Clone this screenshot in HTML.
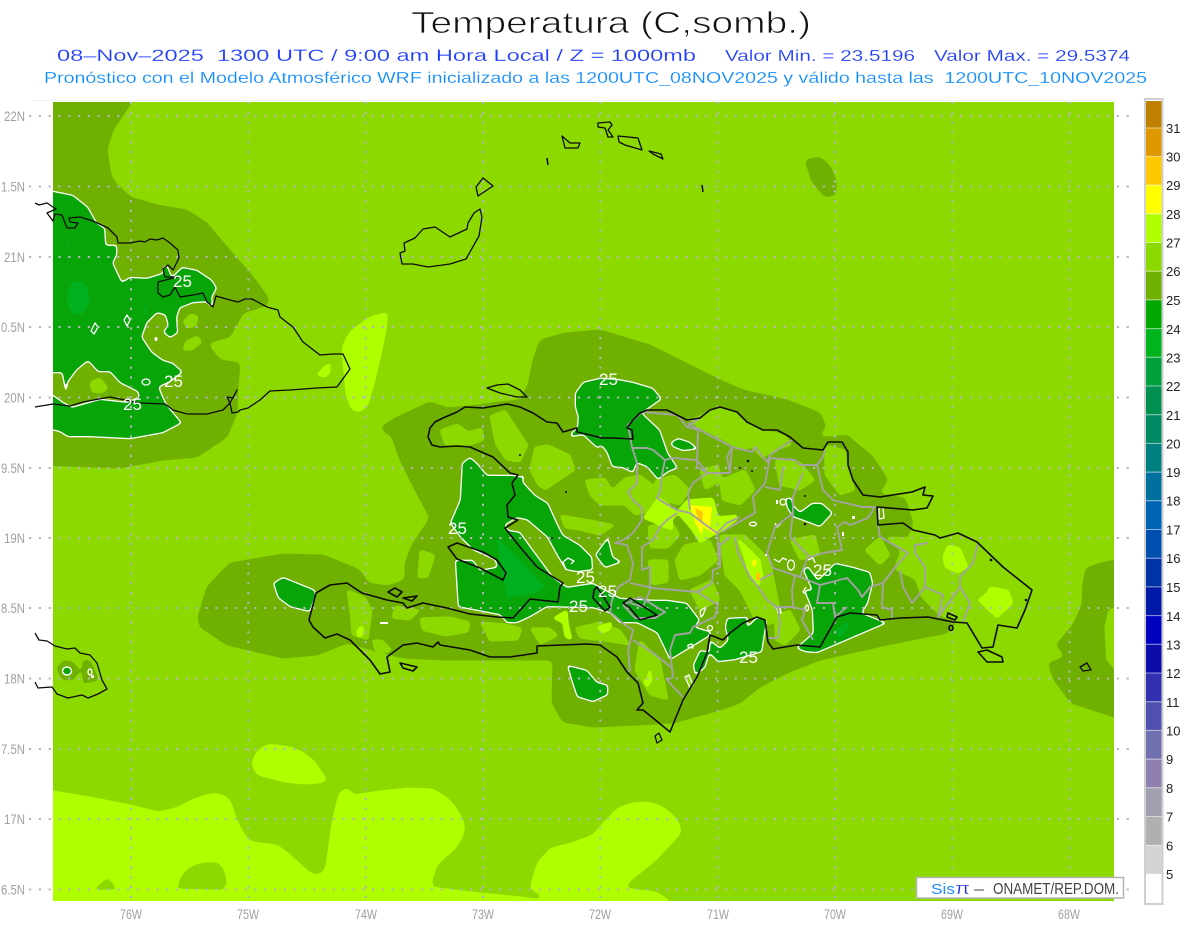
<!DOCTYPE html>
<html><head><meta charset="utf-8"><title>Temperatura</title>
<style>
html,body{margin:0;padding:0;background:#fff}
svg{display:block}
text{font-family:"Liberation Sans",Arial,sans-serif}
.d{fill:#70b000;stroke:#70b000;stroke-width:1;stroke-linejoin:round}
.b{fill:#8cd900;stroke:#8cd900;stroke-width:1;stroke-linejoin:round}
.l{fill:#b0ff00;stroke:#b0ff00;stroke-width:1;stroke-linejoin:round}
.w{fill:none;stroke:#fff;stroke-width:1.3;stroke-linejoin:round}
.p{fill:none;stroke:#a3a3a3;stroke-width:1.9;stroke-linejoin:round}
.n{fill:#fff;font-size:17px}
.a{fill:#a0a0a0;font-size:14px}
.k{fill:#222;font-size:13px}
</style></head><body>
<svg xmlns="http://www.w3.org/2000/svg" width="1200" height="927" viewBox="0 0 1200 927">
<defs>
<clipPath id="plot"><rect x="53" y="102" width="1061" height="799"/></clipPath>
<filter id="s3" filterUnits="userSpaceOnUse" x="0" y="0" width="1200" height="927" color-interpolation-filters="sRGB"><feGaussianBlur stdDeviation="3"/><feColorMatrix values="1 0 0 0 0 0 1 0 0 0 0 0 1 0 0 0 0 0 10 -4.5"/></filter>
<filter id="s2" filterUnits="userSpaceOnUse" x="0" y="0" width="1200" height="927" color-interpolation-filters="sRGB"><feGaussianBlur stdDeviation="1.8"/><feColorMatrix values="1 0 0 0 0 0 1 0 0 0 0 0 1 0 0 0 0 0 10 -4.2"/></filter>
<filter id="tw" filterUnits="userSpaceOnUse" x="0" y="0" width="1200" height="927" color-interpolation-filters="sRGB"><feGaussianBlur stdDeviation="1.6"/><feColorMatrix values="1 0 0 0 0 0 1 0 0 0 0 0 1 0 0 0 0 0 10 -3.7"/></filter>
<filter id="tg" filterUnits="userSpaceOnUse" x="0" y="0" width="1200" height="927" color-interpolation-filters="sRGB"><feGaussianBlur stdDeviation="1.6"/><feColorMatrix values="1 0 0 0 0 0 1 0 0 0 0 0 1 0 0 0 0 0 10 -6.7"/></filter>
<g id="greens">
<polygon points="40,186 53,191 73,195 88,207 97,223 105,228 106,245 117,245 117,255 113,263 122,282 130,277 147,278 163,273 163,267 167,265 172,277 182,267 197,270 212,280 217,288 212,297 213,306 208,305 207,302 193,303 180,308 177,317 178,333 170,338 163,332 168,325 165,315 157,313 147,323 142,337 152,352 163,360 173,363 183,372 170,382 159,387 163,397 167,405 182,423 163,433 130,439 90,437 68,437 60,432 40,427 40,388 53,395 63,402 72,407 100,399 127,402 139,397 138,392 120,383 110,372 98,372 88,361 77,370 68,382 66,395 62,373 40,373"/>
<polygon points="600,378 583,382 575,393 575,407 578,417 577,428 572,432 570,437 583,435 597,448 602,446 607,453 612,467 623,468 633,473 637,463 647,467 658,480 668,472 678,468 668,453 660,430 642,413 662,399 653,388 633,382 617,379"/>
<polygon points="462,463 470,457 477,463 487,475 513,475 522,477 525,468 523,482 535,495 548,503 557,523 563,535 580,545 592,557 593,570 577,572 566,570 558,557 547,537 527,520 517,518 505,525 508,530 520,532 533,550 553,577 567,587 593,583 620,598 653,600 667,600 687,603 700,620 695,627 712,632 708,637 690,648 670,660 657,633 637,623 620,623 610,613 593,608 547,607 530,617 517,623 507,623 500,615 458,607 455,560 473,560 480,570 497,567 495,560 473,550 460,537 450,523 460,500"/>
<polygon points="727,618 748,617 747,627 757,617 767,620 762,652 735,660 718,662 709,653 710,640 720,648 728,640 725,627"/>
<polygon points="835,563 853,567 870,572 873,583 868,603 862,613 887,623 817,653 805,652 796,648 813,633 812,610 804,590 812,590 803,570 808,566 818,580"/>
<polygon points="800,512 812,503 822,503 833,513 820,527 807,522 793,517 787,508 785,498 792,498 793,505"/>
<polygon points="670,443 678,438 690,442 698,449 683,451 673,447"/>
<polygon points="595,555 608,537 613,557 622,562 605,568"/>
<polygon points="567,665 587,670 597,682 608,685 608,695 593,702 577,697 572,682"/>
<polygon points="273,583 283,577 315,590 316,595 310,612 290,607 278,598"/>
<polygon points="700,650 710,652 705,668 695,675 693,665"/>
</g>
</defs>
<rect width="1200" height="927" fill="#fff"/>
<line x1="32" y1="100.5" x2="1118" y2="100.5" stroke="#f3f3f3"/>
<text x="411" y="33" font-size="31" fill="#111" stroke="#fff" stroke-width=".8" textLength="400" lengthAdjust="spacingAndGlyphs">Temperatura (C,somb.)</text>
<text x="57" y="61" font-size="17" fill="#1f3cff" stroke="#fff" stroke-width=".15" textLength="639" lengthAdjust="spacingAndGlyphs" xml:space="preserve">08–Nov–2025  1300 UTC / 9:00 am Hora Local / Z = 1000mb</text>
<text x="725" y="61" font-size="16" fill="#1f3cff" stroke="#fff" stroke-width=".15" textLength="190" lengthAdjust="spacingAndGlyphs">Valor Min. = 23.5196</text>
<text x="934" y="61" font-size="16" fill="#1f3cff" stroke="#fff" stroke-width=".15" textLength="196" lengthAdjust="spacingAndGlyphs">Valor Max. = 29.5374</text>
<text x="44" y="83" font-size="16" fill="#0f8cff" stroke="#fff" stroke-width=".15" textLength="1103" lengthAdjust="spacingAndGlyphs" xml:space="preserve">Pronóstico con el Modelo Atmosférico WRF inicializado a las 1200UTC_08NOV2025 y válido hasta las  1200UTC_10NOV2025</text>

<g clip-path="url(#plot)">
<rect x="53" y="102" width="1061" height="799" fill="#8cd900"/>
<!-- bright sea -->
<g filter="url(#s3)">
<polygon class="l" points="40,788 53,791 90,797 130,805 159,812 176,808 196,798 214,793 225,796 231,802 236,818 240,827 246,837 252,842 277,845 288,853 298,862 310,873 317,875 323,873 326,867 329,845 332,823 336,805 340,792 348,788 353,795 380,791 408,788 433,789 446,797 454,805 462,818 465,828 461,840 454,850 444,858 437,865 433,876 431,887 471,892 521,897 542,900 544,897 530,888 534,874 538,862 551,848 572,843 593,835 605,821 618,808 632,803 648,802 661,806 671,813 679,823 681,833 656,860 631,880 623,888 656,892 669,900 672,915 40,915"/>
<polygon class="l" points="252,762 258,750 269,744 290,747 303,752 315,762 327,780 320,783 303,784 285,782 269,778 258,775 254,770"/>
<polygon class="l" points="388,312 386,330 382,350 375,380 368,405 360,412 352,410 346,395 342,350 345,340 352,330 370,317"/>
</g>
<g filter="url(#s2)">
<polygon class="b" points="178,888 181,878 187,870 196,865 206,863 216,863 221,866 225,875 226,883 223,889"/>
<polygon class="b" points="95,889 107,879 110,881 116,889"/>
</g>
<!-- dark -->
<g filter="url(#s3)">
<polygon class="d" points="40,90 140,90 113,130 107,150 110,170 113,180 130,197 157,205 187,210 207,223 227,247 250,273 268,297 268,305 243,313 230,337 207,343 220,360 240,363 238,387 237,413 227,437 197,457 163,460 120,468 40,465"/>
<polygon class="d" points="1125,558 1101,563 1086,568 1083,583 1082,605 1073,625 1056,645 1066,657 1048,663 1054,680 1071,703 1114,717 1125,720"/>
<polygon class="d" points="805,160 820,157 830,166 836,180 836,195 825,197 812,182"/>
<polygon class="d" points="533,360 540,340 565,333 600,330 650,345 690,365 720,380 743,390 787,400 820,413 826,427 817,437 830,437 847,435 873,457 888,480 878,494 905,498 913,523 908,537 880,535 900,550 893,570 915,580 920,597 940,617 957,622 947,633 887,645 820,660 787,673 760,687 740,703 720,710 673,723 637,725 593,727 563,722 552,703 553,660 483,660 443,660 403,658 383,653 347,643 317,655 283,658 227,645 200,627 198,617 207,587 230,563 283,554 323,555 360,570 368,583 388,586 405,580 405,563 412,545 430,518 415,490 400,460 392,437 380,428 395,418 430,402 447,408 470,406 500,402 520,400 528,385"/>
</g>
<g filter="url(#s2)">
<polygon class="d" points="57,668 64,661 72,662 80,671 72,680 62,679"/>
<polygon class="d" points="82,670 84,660 90,661 95,672 98,680 84,683"/>
</g>
<!-- base patches -->
<g filter="url(#s2)">
<polygon class="b" points="1125,604 1109,610 1105,627 1107,660 1125,680"/>
<polygon class="b" points="190,314 198,316 196,326 188,328 183,322"/>
<polygon class="b" points="186,341 197,336 202,342 192,350 183,350"/>
<polygon class="b" points="90,382 100,378 108,388 102,393 92,392"/>
<polygon class="b" points="440,430 458,424 468,432 482,428 484,440 470,445 445,445"/>
<polygon class="b" points="490,416 505,410 518,430 528,445 520,462 506,460 496,445"/>
<polygon class="b" points="535,447 548,445 570,455 575,470 560,480 545,490 538,485 530,470"/>
<polygon class="b" points="585,480 605,478 612,490 625,478 640,475 660,490 655,510 635,515 625,505 600,505 590,495"/>
<polygon class="b" points="560,515 590,520 615,525 600,535 580,530 565,528"/>
<polygon class="b" points="420,550 435,555 428,577 418,578"/>
<polygon class="b" points="347,590 365,597 372,610 368,640 352,635 350,610"/>
<polygon class="b" points="395,606 420,610 410,620 392,618"/>
<polygon class="b" points="372,640 382,640 392,650 380,655 375,650"/>
<polygon class="b" points="420,618 450,617 470,622 468,632 445,636 422,630"/>
<polygon class="b" points="480,622 505,624 522,628 518,640 490,641"/>
<polygon class="b" points="530,628 550,628 558,636 540,644"/>
<polygon class="b" points="575,628 600,622 620,630 630,645 605,641 580,638"/>
<polygon class="b" points="690,420 708,412 722,408 737,412 747,422 763,430 785,435 792,445 775,450 762,458 752,447 742,450 718,437 698,427"/>
<polygon class="b" points="648,526 672,522 680,535 668,548 650,548"/>
<polygon class="b" points="684,545 710,540 718,560 700,575 680,580 675,560"/>
<polygon class="b" points="648,560 668,560 668,582 652,585"/>
<polygon class="b" points="720,535 745,535 770,560 780,610 770,625 755,620 740,590 725,575 722,555"/>
<polygon class="b" points="825,445 845,450 848,470 855,490 840,495 825,475"/>
<polygon class="b" points="775,460 800,462 815,480 800,490 780,485"/>
<polygon class="b" points="865,550 880,537 890,555 880,565"/>
<polygon class="b" points="775,615 790,610 800,630 785,645 775,640"/>
<polygon class="b" points="640,640 660,660 668,700 650,695 635,670"/>
<polygon class="b" points="720,480 745,470 755,490 740,505 722,500"/>
<polygon class="b" points="655,480 675,475 690,490 680,505 660,500"/>
<polygon class="b" points="700,470 718,465 722,480 705,490"/>
<polygon class="b" points="790,540 815,535 820,555 800,560"/>
<polygon class="b" points="690,590 712,580 720,600 700,610"/>
</g>
<!-- bright on land -->
<g filter="url(#s2)">
<polygon class="l" points="317,375 324,367 330,363 330,373 325,377"/>
<polygon class="l" points="658,497 670,505 678,513 672,520 673,530 663,527 653,522 643,518 653,505"/>
<polygon class="l" points="687,500 713,498 718,517 737,515 737,520 723,530 710,537 700,543 692,530 677,512"/>
<polygon class="l" points="737,538 747,547 760,560 763,577 757,587 767,600 760,593 748,570 743,553"/>
<polygon class="l" points="948,545 960,548 968,567 958,573 945,567 943,557"/>
<polygon class="l" points="990,587 1008,590 1013,603 997,618 978,600 987,593"/>
<polygon class="l" points="553,618 567,610 568,623 572,640 565,637 563,623"/>
<polygon class="l" points="597,627 612,622 610,630 602,633"/>
<polygon class="l" points="647,680 650,667 652,680 647,688 643,680"/>
<polygon class="l" points="357,630 363,625 363,635 358,638"/>
</g>
<rect x="380" y="622" width="8" height="2" fill="#fff"/>
<!-- yellow & orange -->
<polygon fill="#ff0" points="690,505 712,507 710,527 720,532 715,534 703,527 702,535 695,523"/>
<polygon fill="#ffc800" points="695,508 703,512 702,522 698,518"/>
<polygon fill="#ff0" points="753,559 757,561 755,567 752,565"/>
<polygon fill="#ffc800" points="756,573 760,573 760,580 756,580"/>
<!-- 25 contour greens -->
<use href="#greens" fill="#fff" filter="url(#tw)"/>
<use href="#greens" fill="#08a508" filter="url(#tg)"/>
<ellipse cx="78" cy="298" rx="11" ry="17" fill="#00b01e"/>
<polygon fill="#00b01e" points="66,240 69,244 66,246"/>
<polygon fill="#00b01e" points="141,312 147,306 145,315"/>
<polygon class="w" points="95,323 98,327 94,334 91,331"/>
<polygon class="w" points="127,315 130,320 127,326 124,320"/>
<ellipse class="w" cx="146" cy="382" rx="4" ry="3"/>
<ellipse cx="156" cy="339" rx="1.5" ry="2" fill="#fff"/>
<ellipse cx="67" cy="671" rx="4.5" ry="4" fill="#08a508" stroke="#fff" stroke-width="1.4"/>
<ellipse class="w" cx="90" cy="672" rx="2" ry="3"/>
<rect x="91" y="675" width="3" height="3" fill="#eee"/>
<polyline class="w" points="566,570 563,562 568,558 574,561 571,564"/>
<polygon fill="#00b01e" points="497,537 517,557 545,587 537,593 507,598 500,563"/>
<polygon fill="#00b01e" points="835,630 848,622 848,630 838,638"/>
<polygon fill="#8cd900" stroke="#fff" stroke-width="1.3" points="685,677 689,675 693,685 690,688"/>
<ellipse class="w" cx="753" cy="524" rx="3.5" ry="1.8"/>
<polyline class="w" points="775,523 777,527 781,523"/>
<circle class="w" cx="783" cy="502" r="3"/>
<ellipse class="w" cx="791" cy="565" rx="3.5" ry="5"/>
<polyline class="w" points="774,559 779,562 783,558 787,560"/>
<polyline class="w" points="808,560 813,558 815,563"/>
<polygon class="w" points="879,507 883,508 884,518 879,519"/>
<polyline class="w" points="806,587 803,592 807,595"/>
<ellipse class="w" cx="807" cy="608" rx="1.5" ry="3"/>
<polygon class="w" points="700,611 706,607 703,615 701,617"/>
<circle class="w" cx="710" cy="628" r="2.5"/>
<polygon class="w" points="688,645 692,644 693,648 688,647"/>
<polygon class="w" points="777,607 780,607 781,613 778,613"/>
<rect x="776" y="500" width="2" height="4" fill="#fff"/><rect x="852" y="516" width="3" height="3" fill="#fff"/><rect x="842" y="532" width="2" height="4" fill="#fff"/><rect x="765" y="554" width="2" height="2" fill="#fff"/>
</g>

<!-- grid -->
<g stroke="#b6b6b6" stroke-width="2" stroke-dasharray="2.2 7.6" fill="none">
<path d="M29 116H1136M29 186.500H1136M29 257H1136M29 327H1136M29 397.500H1136M29 468H1136M29 538H1136M29 608H1136M29 678.500H1136M29 749H1136M29 819H1136M29 889.500H1136"/>
<path d="M131 102V905M248.300 102V905M365.600 102V905M483 102V905M600.300 102V905M717.600 102V905M835 102V905M952.300 102V905M1069.600 102V905"/>
</g>

<!-- province lines -->
<g class="p">
<polyline class="p" points="642,412 628,425 632,447 637,463 637,483 628,492 633,500 642,508 642,520 633,533 623,540 615,543 627,545 633,563 630,580 618,587 612,600 610,612 625,625 633,630 628,650 630,670 627,672"/>
<polyline class="p" points="632,448 647,448 653,450 665,460 673,458 697,460 698,430 687,427 677,415 642,412"/>
<polyline class="p" points="665,460 662,475 660,492 657,498 663,502 677,510 690,513 703,523 717,533 727,523 740,517"/>
<polyline class="p" points="697,460 707,473 693,483 688,493 690,510"/>
<polyline class="p" points="707,473 730,473 732,447"/>
<polyline class="p" points="677,513 667,520 660,527 653,540 642,547 642,570 650,567 650,590 643,607 630,603"/>
<polyline class="p" points="717,533 720,550 720,567 713,570 712,583 697,592 653,588 630,583"/>
<polyline class="p" points="697,592 718,605 715,617 693,627 690,633 675,635 670,650 673,677 667,680 683,697"/>
<polyline class="p" points="633,640 653,653 672,668"/>
<polyline class="p" points="698,430 697,467 708,473 730,473 727,457 732,447 700,430 688,423"/>
<polyline class="p" points="732,447 752,452 755,447 767,462 770,455 792,440"/>
<polyline class="p" points="770,458 765,483 753,497 755,513 730,527 722,532"/>
<polyline class="p" points="765,487 780,490 783,467"/>
<polyline class="p" points="770,458 795,460 800,465 817,465 823,457 825,450"/>
<polyline class="p" points="803,473 793,497 793,513 790,537"/>
<polyline class="p" points="817,465 823,490 833,500 862,507 875,507 868,518 850,525 845,522 837,527 842,550 823,553 810,557 790,537"/>
<polyline class="p" points="793,513 775,527 767,553 773,568 800,577 808,557"/>
<polyline class="p" points="735,538 738,553 750,577 758,587 767,600 777,607 793,607 792,590 795,575 800,577"/>
<polyline class="p" points="760,580 773,573"/>
<polyline class="p" points="793,607 805,610 802,620 813,640"/>
<polyline class="p" points="778,607 780,623 778,638 768,638"/>
<polyline class="p" points="730,537 718,547 720,567"/>
<polyline class="p" points="712,583 698,592"/>
<polyline class="p" points="820,585 847,578 858,590 862,597 870,587 883,583 897,565 908,553 880,537 878,525"/>
<polyline class="p" points="897,565 883,583 882,607 892,610 892,620"/>
<polyline class="p" points="900,570 903,587 912,603 925,587 925,567 915,553 915,545 928,543"/>
<polyline class="p" points="925,587 943,595 938,617 953,597 960,587 960,577 973,563 978,543"/>
<polyline class="p" points="960,587 970,603 963,622"/>
<polyline class="p" points="820,585 817,603 833,603 835,617 847,607"/>
<polyline class="p" points="623,605 640,597 665,612 655,618 635,618 623,605"/>
<polyline class="p" points="687,427 700,418 690,420"/>
<polyline class="p" points="800,577 820,585"/>
</g>

<!-- coast -->
<g fill="none" stroke="#0c0c0c" stroke-width="1.3" stroke-linejoin="round">
<polyline points="35,203 39,205 47,203 56,209 47,213 53,221 55,214 62,215 65,223 67,228 75,228 78,223 70,222 69,218 80,217 93,221 108,228 117,237 118,243 130,243 140,241 145,242 150,239 157,240 163,238 170,243 178,250 179,258 173,270 168,265 163,269 165,277 177,277 158,282 158,293 163,297 170,295 175,287 180,297 193,295 203,293 207,302 213,307 216,296 230,300 238,302 245,299 252,299 267,307 278,310 280,317 293,327 303,342 320,355 333,354 343,354 350,369 337,387 317,388 290,390 270,391 260,400 248,408 240,410 238,412 232,413 230,403 237,390 233,398 227,397 230,403 223,410 207,414 187,414 173,410 165,404 140,403 110,397 83,402 70,406 53,404 35,407"/>
<polyline points="35,633 39,640 47,641 55,646 67,649 75,648 80,653 90,655 97,663 102,680 107,689 98,694 88,698 82,695 68,698 57,694 52,687 38,688 35,682"/>
<polygon points="402,264 400,253 405,251 404,243 415,238 423,229 435,227 450,237 467,229 468,223 474,213 480,209 482,217 479,236 466,259 450,264 428,267 413,264"/>
<polygon points="476,187 483,178 493,186 478,196"/>
<polygon points="562,136 570,143 580,143 578,148 565,148"/>
<polygon points="598,123 610,122 612,125 608,130 613,137 608,137 605,128 598,127"/>
<polygon points="618,136 638,138 642,150 625,145 619,142"/>
<polygon points="649,151 661,154 663,159 653,154"/>
<path d="M547 158L548 165M702 185L703 192" stroke-width="1.5"/>
<polygon points="1080,667 1087,663 1091,670 1083,671" />
<polygon points="487,388 497,385 508,384 520,390 527,397 517,397 500,393"/>
<g stroke-width="1.6">
<polyline points="428,437 430,428 435,422 443,418 457,412 465,407 483,408 507,404 520,407 533,413 547,422 557,423 563,432 577,428 577,432 590,435 602,438 613,438 633,439 632,430 627,428 633,420 640,413 647,410 667,410 687,420 700,418 710,410 720,407 737,412 747,422 763,430 777,430 790,437 803,448 823,450 828,442 842,442 848,452 848,465 853,480 863,495 880,497 912,492 925,487 923,495 933,496 927,508 913,510 877,507 878,525 903,523 913,530 935,535 940,538 958,533 977,542 1003,567 1032,590 1025,610 1017,628 998,625 993,647 982,648 967,623 953,622 928,617 900,618 880,620 877,615 850,613 837,617 820,647 797,645 773,649 768,642 765,620 757,617 743,623 730,633 723,640 710,635 707,653 697,677 683,700 670,732 653,718 643,710 637,710 643,703 638,683 627,672 617,657 600,645 587,644 537,646 537,653 510,657 490,657 470,650 440,645 438,642 433,647 417,643 403,645 387,657 390,672 380,674 370,660 350,640 337,634 325,638 313,627 309,620 316,593 330,585 347,583 362,593 387,600 403,603 407,608 423,603 447,608 470,614 497,617 513,618 523,607 530,599 558,602 560,587 563,583 553,577 537,567 520,547 505,528 518,520 508,517 507,505 515,495 512,483 518,475 510,473 493,457 470,447 457,446 440,447 432,445 428,437"/>
<polygon points="448,547 457,543 483,552 497,560 506,573 503,580 480,568 457,559"/>
<polygon points="594,590 597,587 610,607 605,611 593,598"/>
<polygon points="623,603 630,598 657,615 640,620 630,608"/>
<polygon points="400,663 417,667 413,671 403,668"/>
<polygon points="388,592 395,588 402,592 397,597"/>
<polygon points="403,598 417,596 412,601"/>
<polygon points="978,652 987,650 1002,657 1003,662 987,662"/>
<polygon points="948,613 957,617 955,620 947,617"/>
<ellipse cx="951" cy="628" rx="2" ry="2.500"/>
</g>
<polygon points="655,736 659,733 662,740 657,743"/>
</g>
<g fill="#111">
<circle cx="748" cy="461" r="1.300"/><circle cx="740" cy="468" r="1"/><circle cx="752" cy="471" r="1"/><circle cx="805" cy="496" r="1"/><circle cx="805" cy="524" r="1.300"/><circle cx="991" cy="560" r="1.400"/><circle cx="1026" cy="600" r="1.300"/><circle cx="566" cy="492" r="1"/><circle cx="552" cy="538" r="1"/><circle cx="520" cy="455" r="1"/>
</g>

<!-- 25 labels -->
<g class="n">
<text class="n" x="173" y="287">25</text>
<text class="n" x="164" y="387">25</text>
<text class="n" x="123" y="410">25</text>
<text class="n" x="599" y="385">25</text>
<text class="n" x="448" y="534">25</text>
<text class="n" x="576" y="583">25</text>
<text class="n" x="598" y="597">25</text>
<text class="n" x="569" y="612">25</text>
<text class="n" x="813" y="576">25</text>
<text class="n" x="739" y="663">25</text>
</g>

<!-- axis labels -->
<g class="a" text-anchor="end">
<text class="a" x="25" y="121" textLength="21" lengthAdjust="spacingAndGlyphs">22N</text>
<text class="a" x="25" y="191.500" textLength="24" lengthAdjust="spacingAndGlyphs">1.5N</text>
<text class="a" x="25" y="262" textLength="21" lengthAdjust="spacingAndGlyphs">21N</text>
<text class="a" x="25" y="332" textLength="24" lengthAdjust="spacingAndGlyphs">0.5N</text>
<text class="a" x="25" y="402.500" textLength="21" lengthAdjust="spacingAndGlyphs">20N</text>
<text class="a" x="25" y="473" textLength="24" lengthAdjust="spacingAndGlyphs">9.5N</text>
<text class="a" x="25" y="543" textLength="21" lengthAdjust="spacingAndGlyphs">19N</text>
<text class="a" x="25" y="613" textLength="24" lengthAdjust="spacingAndGlyphs">8.5N</text>
<text class="a" x="25" y="683.500" textLength="21" lengthAdjust="spacingAndGlyphs">18N</text>
<text class="a" x="25" y="754" textLength="24" lengthAdjust="spacingAndGlyphs">7.5N</text>
<text class="a" x="25" y="824" textLength="21" lengthAdjust="spacingAndGlyphs">17N</text>
<text class="a" x="25" y="894.500" textLength="24" lengthAdjust="spacingAndGlyphs">6.5N</text>
</g>
<g class="a">
<text class="a" x="120" y="919" textLength="22" lengthAdjust="spacingAndGlyphs">76W</text>
<text class="a" x="237" y="919" textLength="22" lengthAdjust="spacingAndGlyphs">75W</text>
<text class="a" x="355" y="919" textLength="22" lengthAdjust="spacingAndGlyphs">74W</text>
<text class="a" x="472" y="919" textLength="22" lengthAdjust="spacingAndGlyphs">73W</text>
<text class="a" x="589" y="919" textLength="22" lengthAdjust="spacingAndGlyphs">72W</text>
<text class="a" x="707" y="919" textLength="22" lengthAdjust="spacingAndGlyphs">71W</text>
<text class="a" x="824" y="919" textLength="22" lengthAdjust="spacingAndGlyphs">70W</text>
<text class="a" x="941" y="919" textLength="22" lengthAdjust="spacingAndGlyphs">69W</text>
<text class="a" x="1058" y="919" textLength="22" lengthAdjust="spacingAndGlyphs">68W</text>
</g>

<!-- logo -->
<rect x="916.500" y="877.500" width="207" height="20.500" fill="#fff" stroke="#b4b4b4" stroke-width="1.500"/>
<text x="931" y="894" font-size="15" fill="#1e90ff" textLength="24" lengthAdjust="spacingAndGlyphs">Sis</text>
<text x="955" y="894" font-size="17" fill="#2030e0" stroke="#fff" stroke-width=".3" textLength="15" lengthAdjust="spacingAndGlyphs">π</text>
<text x="974" y="894" font-size="15" fill="#444" textLength="10" lengthAdjust="spacingAndGlyphs">–</text>
<text x="993" y="894" font-size="16" fill="#444" textLength="126" lengthAdjust="spacingAndGlyphs">ONAMET/REP.DOM.</text>

<!-- colorbar -->
<rect x="1145" y="99" width="17.500" height="805" fill="#fff" stroke="#cfcfcf" stroke-width="2"/>
<g>
<rect x="1146" y="101" width="15.500" height="27" fill="#bf8000"/>
<rect x="1146" y="128" width="15.500" height="28.700" fill="#e09800"/>
<rect x="1146" y="156.400" width="15.500" height="28.700" fill="#ffc800"/>
<rect x="1146" y="185.100" width="15.500" height="28.700" fill="#ffff00"/>
<rect x="1146" y="213.800" width="15.500" height="28.700" fill="#b0ff00"/>
<rect x="1146" y="242.500" width="15.500" height="28.700" fill="#8cd900"/>
<rect x="1146" y="271.200" width="15.500" height="28.700" fill="#70b000"/>
<rect x="1146" y="299.900" width="15.500" height="28.700" fill="#00a800"/>
<rect x="1146" y="328.600" width="15.500" height="28.700" fill="#00b41e"/>
<rect x="1146" y="357.300" width="15.500" height="28.700" fill="#00a03c"/>
<rect x="1146" y="386" width="15.500" height="28.700" fill="#009150"/>
<rect x="1146" y="414.700" width="15.500" height="28.700" fill="#008a64"/>
<rect x="1146" y="443.400" width="15.500" height="28.700" fill="#008080"/>
<rect x="1146" y="472.100" width="15.500" height="28.700" fill="#00709e"/>
<rect x="1146" y="500.800" width="15.500" height="28.700" fill="#0064b4"/>
<rect x="1146" y="529.500" width="15.500" height="28.700" fill="#0050b0"/>
<rect x="1146" y="558.200" width="15.500" height="28.700" fill="#0032a8"/>
<rect x="1146" y="586.900" width="15.500" height="28.700" fill="#0019a8"/>
<rect x="1146" y="615.600" width="15.500" height="28.700" fill="#0000c0"/>
<rect x="1146" y="644.300" width="15.500" height="28.700" fill="#0c0caa"/>
<rect x="1146" y="673" width="15.500" height="28.700" fill="#3030b0"/>
<rect x="1146" y="701.700" width="15.500" height="28.700" fill="#5050b0"/>
<rect x="1146" y="730.400" width="15.500" height="28.700" fill="#7070b0"/>
<rect x="1146" y="759.100" width="15.500" height="28.700" fill="#9080b0"/>
<rect x="1146" y="787.800" width="15.500" height="28.700" fill="#a0a0b0"/>
<rect x="1146" y="816.500" width="15.500" height="28.700" fill="#b0b0b0"/>
<rect x="1146" y="845.200" width="15.500" height="28.700" fill="#d4d4d4"/>
<rect x="1146" y="873.900" width="15.500" height="29" fill="#ffffff"/>
</g>
<g stroke="#fff" stroke-opacity=".55" stroke-width="1">
<path d="M1146 128H1161.500M1146 156.400H1161.500M1146 185.100H1161.500M1146 213.800H1161.500M1146 242.500H1161.500M1146 271.200H1161.500M1146 299.900H1161.500M1146 328.600H1161.500M1146 357.300H1161.500M1146 386H1161.500M1146 414.700H1161.500M1146 443.400H1161.500M1146 472.100H1161.500M1146 500.800H1161.500M1146 529.500H1161.500M1146 558.200H1161.500M1146 586.900H1161.500M1146 615.600H1161.500M1146 644.300H1161.500M1146 673H1161.500M1146 701.700H1161.500M1146 730.400H1161.500M1146 759.100H1161.500M1146 787.800H1161.500M1146 816.500H1161.500M1146 845.200H1161.500"/>
</g>
<g class="k">
<text class="k" x="1166" y="133">31</text>
<text class="k" x="1166" y="161.500">30</text>
<text class="k" x="1166" y="190">29</text>
<text class="k" x="1166" y="219">28</text>
<text class="k" x="1166" y="247.500">27</text>
<text class="k" x="1166" y="276">26</text>
<text class="k" x="1166" y="305">25</text>
<text class="k" x="1166" y="334">24</text>
<text class="k" x="1166" y="362.500">23</text>
<text class="k" x="1166" y="391">22</text>
<text class="k" x="1166" y="420">21</text>
<text class="k" x="1166" y="448.500">20</text>
<text class="k" x="1166" y="477">19</text>
<text class="k" x="1166" y="505.500">18</text>
<text class="k" x="1166" y="534.500">17</text>
<text class="k" x="1166" y="563">16</text>
<text class="k" x="1166" y="592">15</text>
<text class="k" x="1166" y="621">14</text>
<text class="k" x="1166" y="649.500">13</text>
<text class="k" x="1166" y="678">12</text>
<text class="k" x="1166" y="707">11</text>
<text class="k" x="1166" y="735.500">10</text>
<text class="k" x="1166" y="764">9</text>
<text class="k" x="1166" y="793">8</text>
<text class="k" x="1166" y="821.500">7</text>
<text class="k" x="1166" y="850.500">6</text>
<text class="k" x="1166" y="879">5</text>
</g>
</svg>
</body></html>
